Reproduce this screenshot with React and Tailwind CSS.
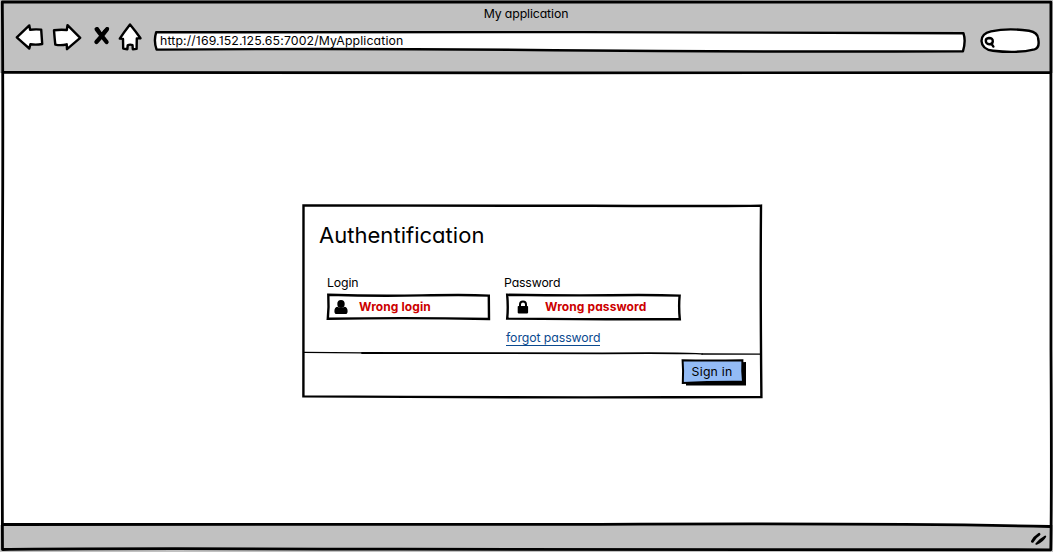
import React from "react";

const FONT = "font-['Inter','Lato',sans-serif] [font-feature-settings:'cv11','cv01','ss07']";

function Sketch({ children, w, h, className = "" }) {
  return (
    <svg
      width={w}
      height={h}
      viewBox={`0 0 ${w} ${h}`}
      className={`pointer-events-none shrink-0 overflow-visible ${className}`}
      fill="none"
      stroke="#000"
      strokeWidth="2.4"
      strokeLinejoin="round"
      strokeLinecap="round"
      aria-hidden="true"
    >
      {children}
    </svg>
  );
}

function NavIcons() {
  return (
    <div className="flex items-start">
      <Sketch w={28} h={28}>
        <path d="M1.8 13.4 L14.3 1.4 L15.1 5.7 Q20.5 5.1 26.2 5.6 L27.2 20 Q21 21.2 15.4 20.2 L14.3 24.5 Q8.4 19.4 1.8 13.4 Z" fill="#fff" />
      </Sketch>
      <Sketch w={28} h={28} className="ml-[9px]">
        <path d="M2 6.3 Q8 5.4 14.8 6 L15.5 1.2 L28.2 13.8 L15 25.2 L14.7 20.3 Q9 21.8 3.3 20.6 Q2.6 14 2 6.3 Z" fill="#fff" />
      </Sketch>
      <Sketch w={17} h={20} className="mt-[2px] ml-[13px]">
        <path d="M3.6 3.2 Q8 9 13.6 16 M14 3.2 Q9.4 9.6 3.4 16" strokeWidth="4.2" />
        <path d="M4.4 2.6 Q7.4 7.6 9.2 9.6 M14.6 2.6 Q11 5 9 8.8" strokeWidth="3" />
      </Sketch>
      <Sketch w={24} h={28} className="ml-[8px]">
        <path d="M12 0.4 Q17.5 7 22.5 14.2 L18.8 14.4 L18.6 24.9 L14.8 25.2 L14.5 21.2 Q12 20 9.7 21.4 L9.4 25.2 L5.2 24.6 L5 14.9 L1.8 14.6 Q6 8 12 0.4 Z" fill="#fff" />
      </Sketch>
    </div>
  );
}

function Header() {
  return (
    <header className="h-[73px] shrink-0 bg-[#c1c1c1]">
      <h1 className="flex h-[24px] items-center justify-center pt-[5px] pr-[1px] text-[12.3px] leading-none tracking-[-0.12px]">My application</h1>
      <div className="flex items-start pl-[15px]">
        <NavIcons />
        <div className="relative mt-[7px] ml-[12px] flex h-[21px] w-[812px] items-center">
          <Sketch w={812} h={21} className="absolute inset-0">
            <path d="M2.2 1.2 Q200 0.6 430 1.1 T809.5 2.3 Q812 10 809 20.2 Q600 21.2 400 19.2 T2.6 18.6 Q-0.6 10 2.2 1.2 Z" fill="#fff" />
          </Sketch>
          <span className="relative pl-[6px] text-[12.3px] leading-none tracking-[0.13px] whitespace-nowrap">http://169.152.125.65:7002/MyApplication</span>
        </div>
        <Sketch w={60} h={26} className="mt-[4px] ml-[14px]">
          <path d="M11 3.4 Q28 -0.3 49 2.8 Q58 4.4 58.2 11 Q60 19.7 54.5 21.3 Q37 25.6 13 22.7 Q2 21.5 1.5 13 Q1.5 5.5 11 3.4 Z" fill="#fff" />
          <path d="M5.8 13 Q5.6 10.4 9 10 Q13 10 12.8 13.4 Q12.6 16.3 9.2 16.2 Q6 16 5.8 13 M11.4 15.8 L13.4 18.6" />
        </Sketch>
      </div>
    </header>
  );
}

function Field({ label, width, error, icon, className, textClass, wobble }) {
  return (
    <div className={className}>
      <div className="text-[12.3px] leading-[16px] tracking-[-0.15px]">{label}</div>
      <div className={`relative mt-[2px] flex h-[28px] items-center ${textClass}`}>
        <Sketch w={width} h={28} className="absolute inset-0">
          <path d={wobble} strokeLinejoin="miter" />
        </Sketch>
        {icon}
        <span className="font-bold leading-none whitespace-nowrap text-[#cc0000]">{error}</span>
      </div>
    </div>
  );
}

function LoginCard() {
  return (
    <section className="relative mt-[131px] ml-[302px] flex h-[194px] w-[461px] flex-col bg-white">
      <Sketch w={461} h={194} className="absolute inset-0">
        <path d="M1.5 1.4 Q150 1.2 290 1.8 T459 1.6 Q458.3 80 459.4 193 Q230 194 1.4 192.4 Q1.2 90 1.5 1.4 Z" strokeLinejoin="miter" />
        <path d="M2 148.4 L60 148.8" strokeWidth="1.3" />
        <path d="M60 149 Q200 149.6 300 149.3 T400 149.8" strokeWidth="1.8" />
        <path d="M400 150 L459 150.2" strokeWidth="1.3" />
      </Sketch>
      <div className="relative h-[149px]">
        <h2 className="pt-[18px] pl-[17px] text-[22px] leading-[26px] tracking-[0.03px]">Authentification</h2>
        <div className="flex pt-[27px] pl-[25px]">
          <Field
            label="Login"
            width={164}
            error="Wrong login"
            className="w-[177px]"
            textClass="pl-[7px] text-[12px] tracking-[0.1px]"
            wobble="M1.3 1.8 Q50 3.4 95 2.4 T161.8 2.6 L162 26 Q80 24.4 0.8 25.8 Q2 15 1.3 1.8 Z"
            icon={
              <svg width="14" height="14" viewBox="0 0 14 14" className="mr-[11px] shrink-0" aria-hidden="true">
                <ellipse cx="7" cy="4" rx="3.7" ry="4" />
                <path d="M.4 11.2Q.4 7.4 3.2 6.8Q7 9 10.8 6.8Q13.6 7.4 13.6 11.2Q13.6 14 11.5 14H2.5Q.4 14 .4 11.2Z" />
              </svg>
            }
          />
          <Field
            label="Password"
            width={176}
            error="Wrong password"
            className="w-[178px]"
            textClass="ml-[2px] pl-[11px] text-[12px] tracking-[0.1px]"
            wobble="M1.2 1.8 Q60 2.6 105 2.2 T173.6 2.6 Q172.6 14 173.8 26.2 Q100 26.6 1.2 25.6 Q2.3 15 1.2 1.8 Z"
            icon={
              <svg width="12" height="14" viewBox="0 0 12 14" className="mr-[16px] shrink-0" aria-hidden="true">
                <path d="M3 7V4.6Q3 1.4 6 1.4T9 4.6V7" fill="none" stroke="#000" strokeWidth="2" />
                <rect x=".7" y="6" width="10.4" height="7.4" rx=".8" />
              </svg>
            }
          />
        </div>
        <a href="#forgot" className="mt-[9px] ml-[204px] block w-[94px] border-b border-[#0b4a8f] text-[12.3px] leading-[15px] tracking-[-0.08px] whitespace-nowrap text-[#0b4a8f]">
          forgot password
        </a>
      </div>
      <div className="relative flex justify-end pt-[6px] pr-[18px]">
        <button className="relative flex h-[26px] w-[64px] items-center justify-center">
          <Sketch w={64} h={26} className="absolute inset-0">
            <path d="M5 6 L65 3 L65 26.6 L5 26.6 Z" fill="#000" stroke="none" />
            <path d="M1.6 1.3 Q30 1.8 61.4 1.2 Q60.8 12 62 22.7 Q30 22.4 1.8 24 Q2.5 12 1.6 1.3 Z" fill="#93bbf5" strokeWidth="2" strokeLinejoin="miter" />
          </Sketch>
          <span className="relative pr-[2px] text-[12.3px] leading-none tracking-[0.2px] whitespace-nowrap">Sign in</span>
        </button>
      </div>
    </section>
  );
}

export default function App() {
  return (
    <div className={`${FONT} relative flex h-[552px] w-[1053px] flex-col overflow-hidden bg-white text-black`}>
      <Header />
      <main className="flex flex-1 items-start">
        <LoginCard />
      </main>
      <footer className="flex h-[27px] shrink-0 items-start justify-end bg-[#c1c1c1] pt-[7px] pr-[5px]">
        <Sketch w={18} h={16}>
          <path d="M2.4 9.3 Q4.4 5.4 9 2.4" strokeWidth="2.9" />
          <path d="M6.4 11.8 Q9.4 7.8 15.2 4.6 Q12.6 9.4 6.4 11.8 Z" fill="#000" strokeWidth="2" />
        </Sketch>
      </footer>
      <Sketch w={1053} h={552} className="absolute inset-0">
        <path d="M2.3 2 Q300 1.4 600 2 T1050.9 2.2 Q1050.2 200 1051 350 T1050.8 549.8 Q700 550.3 400 549.2 T2.5 549.5 Q1.8 400 2.5 250 T2.3 2 Z" strokeWidth="2.8" />
        <path d="M3 72.4 Q300 73.4 560 72.9 T1050 72.6" strokeWidth="2.6" />
        <path d="M3 524.5 Q300 525.3 600 524.3 Q900 523 1050 526.5" strokeWidth="2.8" />
      </Sketch>
    </div>
  );
}
